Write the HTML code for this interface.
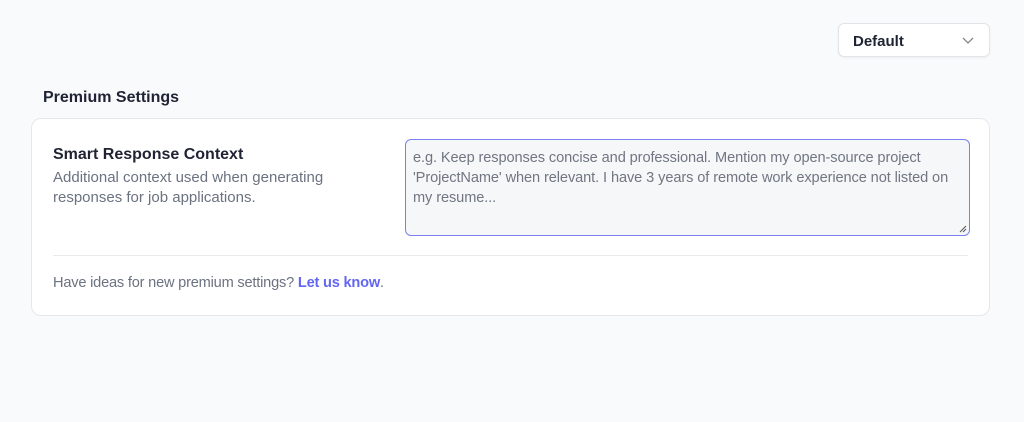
<!DOCTYPE html>
<html><head><style>
body{margin:0;width:1024px;height:422px;background:#f9fafb;font-family:"Liberation Sans",sans-serif;position:relative;overflow:hidden}
.sel{position:absolute;left:838px;top:23px;width:152px;height:34px;background:#fff;border:1px solid #e2e4e9;border-radius:6px;box-sizing:border-box;box-shadow:0 1px 2px rgba(0,0,0,.05)}
.sel span{position:absolute;left:14px;top:9px;font-size:15px;font-weight:bold;color:#1f2333}
.sel svg{position:absolute;right:15px;top:13px}
h2{position:absolute;left:43px;top:89px;margin:0;font-size:16px;font-weight:bold;color:#1f2333}
.card{position:absolute;left:31px;top:118px;width:959px;height:198px;background:#fff;border:1px solid #e5e7eb;border-radius:10px;box-sizing:border-box}
.t{position:absolute;left:21px;top:27px;font-size:16px;font-weight:bold;color:#1f2333}
.d{position:absolute;left:21px;top:49px;font-size:15px;line-height:20px;color:#6b7280;width:300px}
.ta{position:absolute;left:373px;top:20px;width:565px;height:97px;border:1.5px solid #7b7ff0;border-radius:6px;background:#f6f7f9;box-sizing:border-box;padding:8px 7px;font-size:14.6px;letter-spacing:-0.1px;line-height:20px;color:#707682}
.ta svg{position:absolute;right:2px;bottom:2px}
.hr{position:absolute;left:21px;right:21px;top:136px;border-top:1px solid #e9eaee}
.f{position:absolute;left:21px;top:156px;font-size:14.6px;letter-spacing:-0.2px;color:#6b7280}
.f b{color:#6366f1}
</style></head><body>
<div class="sel"><span>Default</span><svg width="12" height="8" viewBox="0 0 12 8"><path d="M1 1l5 5 5-5" stroke="#888" stroke-width="1.3" fill="none"/></svg></div>
<h2>Premium Settings</h2>
<div class="card">
<div class="t">Smart Response Context</div>
<div class="d">Additional context used when generating responses for job applications.</div>
<div class="ta">e.g. Keep responses concise and professional. Mention my open-source project 'ProjectName' when relevant. I have 3 years of remote work experience not listed on my resume...<svg width="8" height="8" viewBox="0 0 8 8"><path d="M7 1L1 7M7 4L4 7" stroke="#555" stroke-width="1"/></svg></div>
<div class="hr"></div>
<div class="f">Have ideas for new premium settings? <b>Let us know</b>.</div>
</div>
</body></html>
